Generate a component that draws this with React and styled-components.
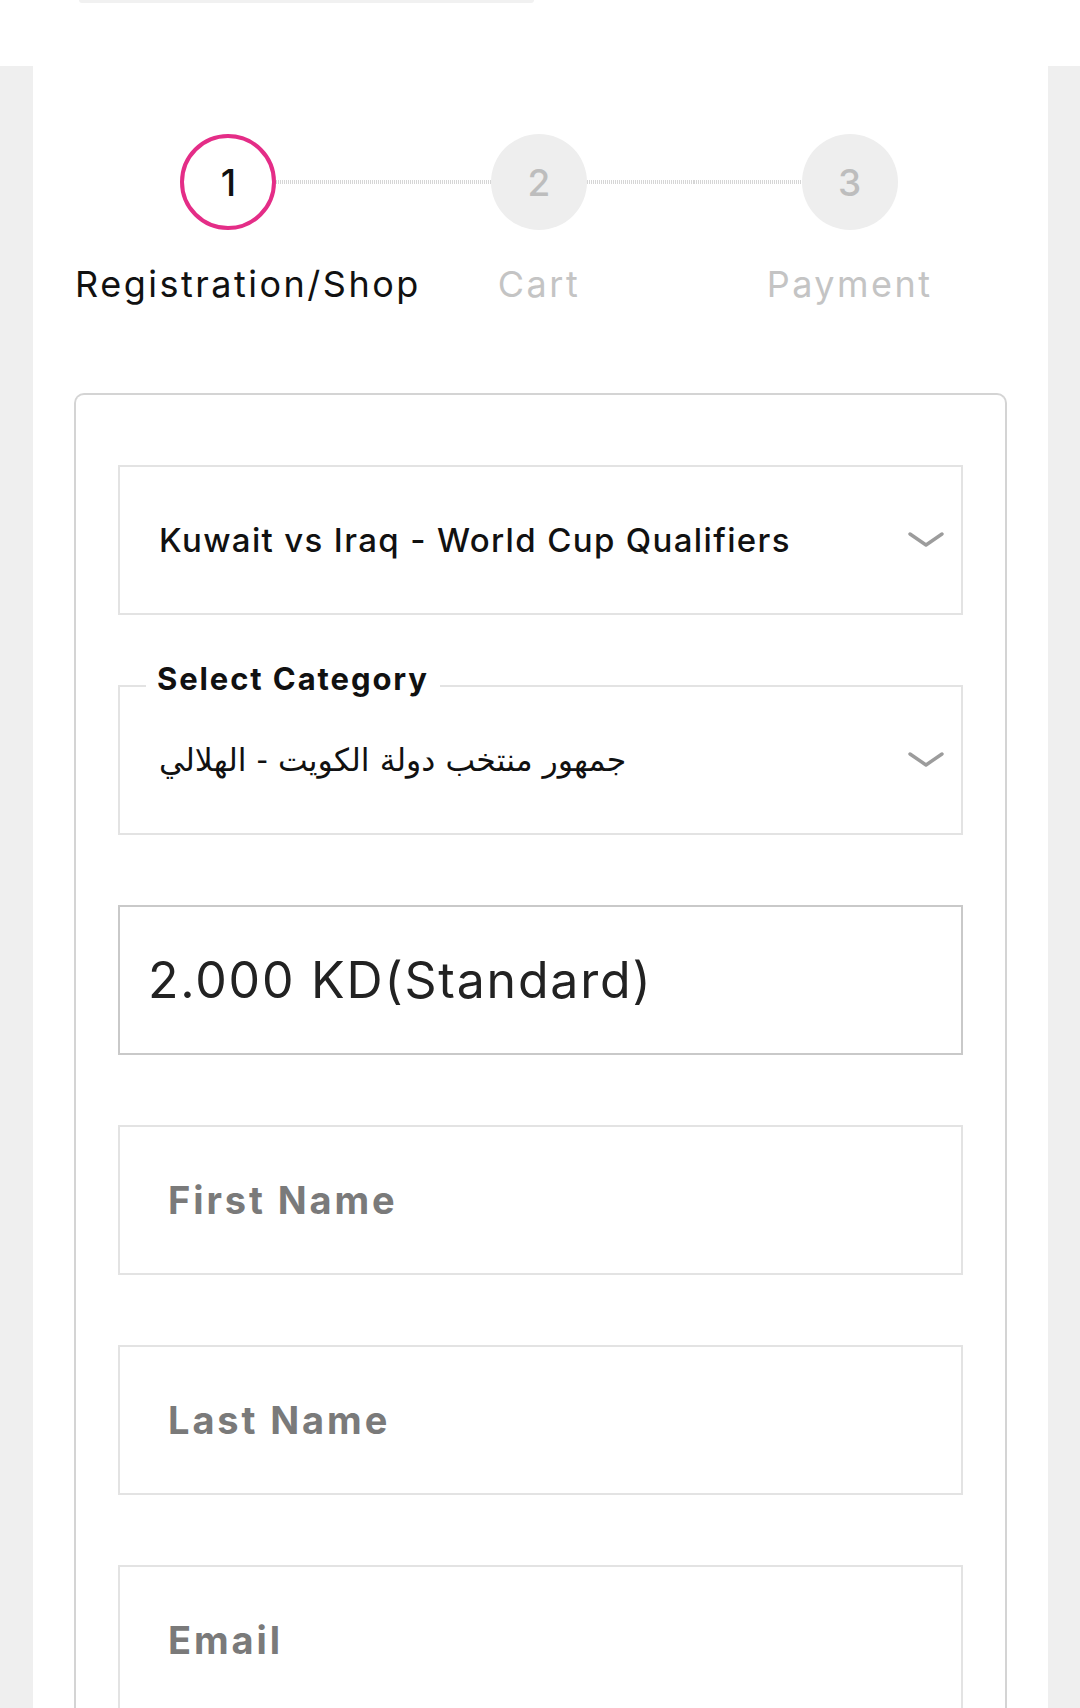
import React from 'react';
import styled, { createGlobalStyle } from 'styled-components';

const Global = createGlobalStyle`
    html, body {
        margin: 0;
        padding: 0;
        background: #efefef;
        font-family: Inter, "Noto Sans", "DejaVu Sans", sans-serif;
        -webkit-font-smoothing: antialiased;
    }
    * { box-sizing: border-box; }
`;

const TopBand = styled.div`
    height: 66px;
    background: #fff;
    padding-left: 79px;
`;

const TopShadow = styled.div`
    width: 455px;
    height: 3px;
    background: #f1f1f1;
    border-radius: 0 0 3px 3px;
`;

const Card = styled.div`
    margin: 0 32px 0 33px;
    background: #fff;
    padding: 68px 41px 0;
    min-height: 1642px;
`;

const Stepper = styled.div`
    display: grid;
    grid-template-columns: repeat(3, minmax(0, 1fr));
    margin: 0 2px 0 -1px;
`;

const Step = styled.div`
    display: flex;
    flex-direction: column;
    align-items: center;
    min-width: 0;
`;

const CircleRow = styled.div`
    width: 100%;
    display: flex;
    align-items: center;
`;

const Line = styled.div`
    flex: 1;
    height: 4px;
    background: ${p => p.$hidden
        ? 'transparent'
        : 'repeating-linear-gradient(90deg, #d6d6d6 0 1px, #fff 1px 2px)'};
`;

const Circle = styled.div`
    width: 96px;
    height: 96px;
    border-radius: 50%;
    flex-shrink: 0;
    display: flex;
    align-items: center;
    justify-content: center;
    font-size: 37px;
    font-weight: 500;
    background: ${p => p.$active ? '#fff' : '#eeeeee'};
    border: ${p => p.$active ? '4px solid #e42d87' : 'none'};
    color: ${p => p.$active ? '#111' : '#bdbdbd'};
`;

const StepLabel = styled.div`
    margin-top: 32px;
    font-size: 36px;
    line-height: 44px;
    letter-spacing: 2.5px;
    white-space: nowrap;
    padding-left: ${p => p.$start ? '2px' : '0'};
    align-self: ${p => p.$start ? 'flex-start' : 'center'};
    color: ${p => p.$active ? '#111' : '#c4c4c4'};
`;

const FormBox = styled.div`
    margin-top: 87px;
    border: 2px solid #d4d4d4;
    border-bottom: none;
    border-radius: 10px 10px 0 0;
    padding: 70px 42px 0;
    display: flex;
    flex-direction: column;
    gap: 70px;
`;

const Field = styled.div`
    position: relative;
    height: 150px;
    border: 2px solid ${p => p.$strong ? '#c9c9c9' : '#e3e3e3'};
    display: flex;
    align-items: center;
    justify-content: space-between;
    padding: 0 17px 0 ${p => p.$pad || 39}px;
`;

const Legend = styled.div`
    position: absolute;
    top: -26px;
    left: 26px;
    padding: 0 11px;
    background: #fff;
    font-size: 31px;
    line-height: 36px;
    font-weight: 700;
    letter-spacing: 1.9px;
    color: #111;
`;

const Value = styled.div`
    font-size: 33px;
    font-weight: 500;
    letter-spacing: 1.35px;
    color: #111;
`;

const ArabicValue = styled.div`
    font-family: "DejaVu Sans", sans-serif;
    font-size: 31.5px;
    color: #111;
`;

const Price = styled.div`
    font-size: 50px;
    font-weight: 400;
    letter-spacing: 1.8px;
    color: #222;
`;

const Placeholder = styled.div`
    font-size: 38px;
    font-weight: 700;
    letter-spacing: 2.9px;
    color: #7a7a7a;
`;

const Chevron = () => (
    <svg width="36" height="20" viewBox="0 0 36 20">
        <polyline points="2,4 18,15 34,4" fill="none" stroke="#9c9c9c" strokeWidth="3.4" strokeLinecap="round" strokeLinejoin="round" />
    </svg>
);

const steps = [
    { n: 1, label: 'Registration/Shop', active: true },
    { n: 2, label: 'Cart' },
    { n: 3, label: 'Payment' },
];

const App = () => (
    <>
        <Global />
        <TopBand><TopShadow /></TopBand>
        <Card>
            <Stepper>
                {steps.map((s, i) => (
                    <Step key={s.n}>
                        <CircleRow>
                            <Line $hidden={i === 0} />
                            <Circle $active={s.active}>{s.n}</Circle>
                            <Line $hidden={i === steps.length - 1} />
                        </CircleRow>
                        <StepLabel $active={s.active} $start={i === 0}>{s.label}</StepLabel>
                    </Step>
                ))}
            </Stepper>
            <FormBox>
                <Field>
                    <Value>Kuwait vs Iraq - World Cup Qualifiers</Value>
                    <Chevron />
                </Field>
                <Field>
                    <Legend>Select Category</Legend>
                    <ArabicValue dir="rtl">جمهور منتخب دولة الكويت - الهلالي</ArabicValue>
                    <Chevron />
                </Field>
                <Field $strong $pad={28}>
                    <Price>2.000 KD(Standard)</Price>
                </Field>
                <Field $pad={48}>
                    <Placeholder>First Name</Placeholder>
                </Field>
                <Field $pad={48}>
                    <Placeholder>Last Name</Placeholder>
                </Field>
                <Field $pad={48}>
                    <Placeholder>Email</Placeholder>
                </Field>
            </FormBox>
        </Card>
    </>
);

export default App;
